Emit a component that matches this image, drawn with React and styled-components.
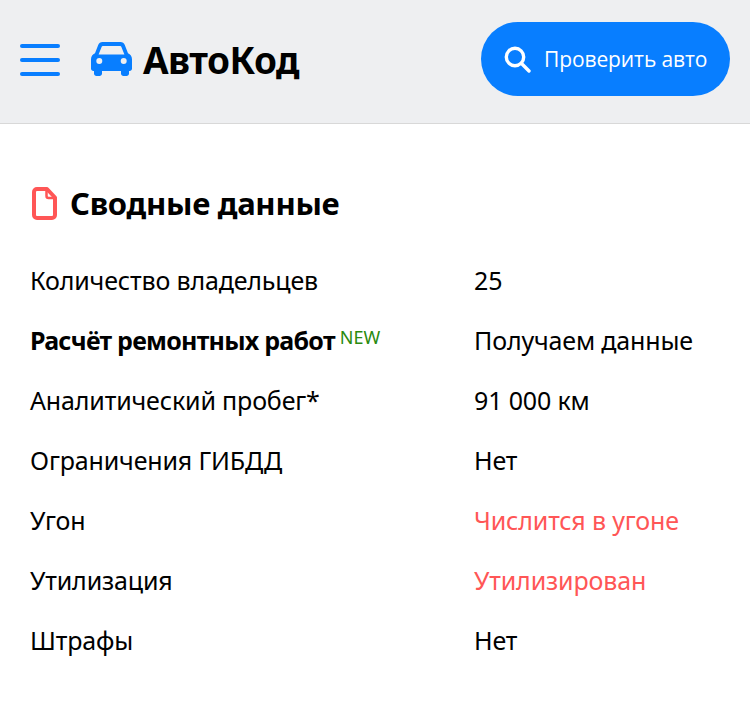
import React from 'react';
import styled, { createGlobalStyle } from 'styled-components';

const Global = createGlobalStyle`
  html, body { margin: 0; padding: 0; background: #fff; }
  body { font-family: "Noto Sans", "Open Sans", sans-serif; color: #000; }
`;

const Header = styled.header`
  display: flex;
  align-items: center;
  height: 123px;
  box-sizing: content-box;
  padding: 0 20px;
  background: #eeeff1;
  border-bottom: 1px solid #d8d8d8;
`;

const HeaderInner = styled.div`
  display: flex;
  align-items: center;
  width: 100%;
  height: 118px;
  margin-bottom: 5px;
`;

const Burger = styled.div`
  display: flex;
  flex-direction: column;
  gap: 10px;
  width: 40px;
  margin: 2px 31px 0 0;
  span {
    height: 4px;
    border-radius: 2px;
    background: #087eff;
  }
`;

const Logo = styled.div`
  display: flex;
  align-items: center;
  gap: 11px;
  flex: 1;
`;

const LogoText = styled.span`
  font-family: "Noto Sans", sans-serif;
  font-size: 37px;
  font-weight: 700;
  letter-spacing: -0.5px;
  line-height: 1;
`;

const CheckButton = styled.div`
  display: flex;
  align-items: center;
  gap: 13px;
  height: 74px;
  width: 249px;
  box-sizing: border-box;
  padding-left: 23px;
  border-radius: 37px;
  background: #087eff;
  color: #fff;
  font-family: "Open Sans", sans-serif;
  font-size: 21px;
  letter-spacing: -0.1px;
  white-space: nowrap;
`;

const Summary = styled.section`
  padding: 62px 30px 0 30px;
`;

const Title = styled.h2`
  display: flex;
  align-items: center;
  gap: 13px;
  margin: 0 0 30px 2px;
  height: 34px;
  font-size: 31px;
  font-weight: 700;
  letter-spacing: -0.3px;
`;

const Row = styled.div`
  display: grid;
  grid-template-columns: 444px 1fr;
  height: 60px;
  align-items: center;
  font-size: 25px;
  letter-spacing: -0.15px;
  white-space: nowrap;
`;

const Label = styled.div`
  font-weight: ${p => (p.$bold ? 700 : 400)};
  letter-spacing: ${p => (p.$bold ? '-0.75px' : 'inherit')};
`;

const Value = styled.div`
  color: ${p => (p.$alert ? '#ff5656' : '#000')};
`;

const NewTag = styled.sup`
  margin-left: 5px;
  font-size: 18px;
  font-weight: 400;
  letter-spacing: 0;
  color: #2a8a0e;
  line-height: 0;
  vertical-align: 6px;
`;

const rows = [
  { label: 'Количество владельцев', value: '25' },
  { label: 'Расчёт ремонтных работ', value: 'Получаем данные', bold: true, tag: true },
  { label: 'Аналитический пробег*', value: '91 000 км' },
  { label: 'Ограничения ГИБДД', value: 'Нет' },
  { label: 'Угон', value: 'Числится в угоне', alert: true },
  { label: 'Утилизация', value: 'Утилизирован', alert: true },
  { label: 'Штрафы', value: 'Нет' },
];

const CarIcon = () => (
  <svg width="41" height="34" viewBox="0 0 41 34">
    <path fill="#087eff" fillRule="evenodd" d="M11.5 0h18c2 0 3.600 1.200 4.300 3l3.200 8.200c2.400 1 4 3.300 4 6v9.300c0 1.400-1 2.500-2.500 2.500h-.5v2.500c0 1.400-1.100 2.500-2.500 2.500h-3c-1.400 0-2.500-1.100-2.500-2.500V29H11v2.500C11 32.900 9.900 34 8.500 34h-3C4.100 34 3 32.900 3 31.500V29h-.5C1 29 0 27.900 0 26.500v-9.300c0-2.700 1.600-5 4-6L7.200 3C7.900 1.200 9.500 0 11.500 0zM11.800 4c-.5 0-.9.300-1.100.8L7.600 12.500h25.800l-3.100-7.700c-.2-.5-.6-.8-1.100-.8H11.800zM8.300 16a3 3 0 1 0 0 6 3 3 0 0 0 0-6zM32.700 16a3 3 0 1 0 0 6 3 3 0 0 0 0-6z" />
  </svg>
);

const SearchIcon = () => (
  <svg width="27" height="27" viewBox="0 0 27 27" fill="none" stroke="#fff" strokeLinecap="round">
    <circle cx="11" cy="11" r="8.700" strokeWidth="3.400" />
    <path d="M17.800 17.800L25 25" strokeWidth="3.400" />
  </svg>
);

const DocIcon = () => (
  <svg width="25" height="33" viewBox="0 0 25 33" fill="none" stroke="#ff5656" strokeLinejoin="round" strokeLinecap="round">
    <path strokeWidth="4" d="M5 2h10l8 8.500V28c0 1.700-1.300 3-3 3H5c-1.700 0-3-1.300-3-3V5c0-1.700 1.300-3 3-3z" />
    <path strokeWidth="2.500" d="M14.500 3v6c0 1.200.8 2 2 2h5.500" />
  </svg>
);

export default function App() {
  return (
    <>
      <Global />
      <Header>
        <HeaderInner>
          <Burger><span /><span /><span /></Burger>
          <Logo>
            <CarIcon />
            <LogoText>АвтоКод</LogoText>
          </Logo>
          <CheckButton>
            <SearchIcon />
            Проверить авто
          </CheckButton>
        </HeaderInner>
      </Header>
      <Summary>
        <Title><DocIcon />Сводные данные</Title>
        {rows.map(r => (
          <Row key={r.label}>
            <Label $bold={r.bold}>
              {r.label}
              {r.tag && <NewTag>NEW</NewTag>}
            </Label>
            <Value $alert={r.alert}>{r.value}</Value>
          </Row>
        ))}
      </Summary>
    </>
  );
}
